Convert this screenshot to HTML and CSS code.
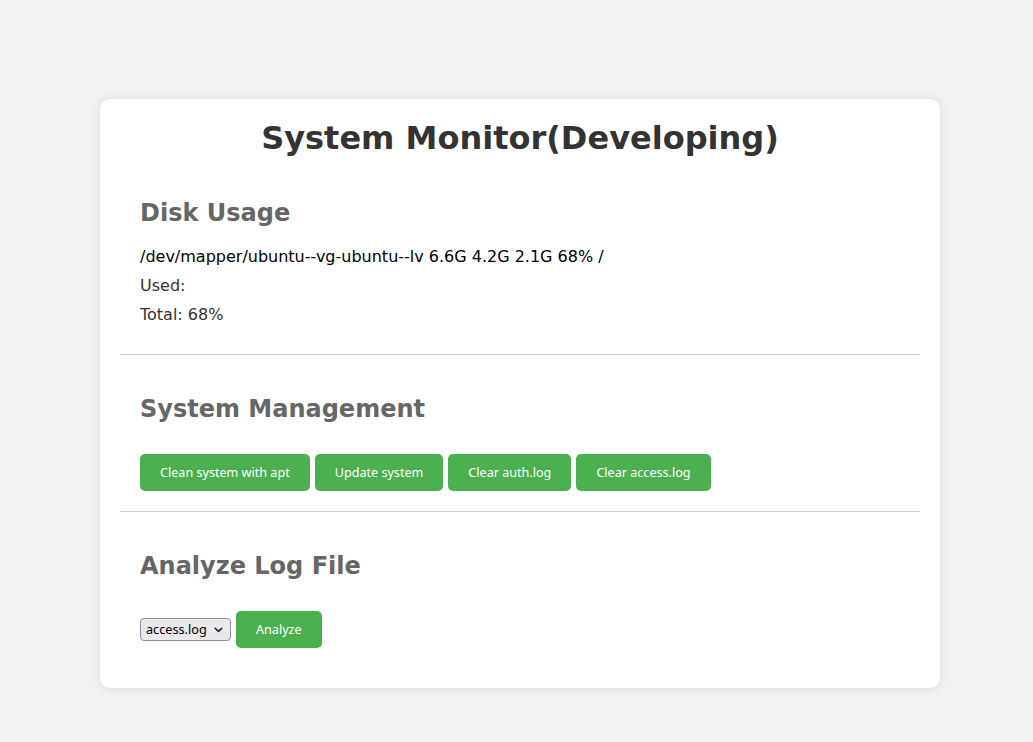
FILE: index.html
```html
<!DOCTYPE html>
<html lang="en">
<head>
<meta charset="utf-8">
<title>System Monitor</title>
<link rel="stylesheet" href="styles.css">
</head>
<body>
<div class="container">
  <h1 class="title">System Monitor(Developing)</h1>
  <section class="section">
    <h2 class="section-title">Disk Usage</h2>
    <p class="line line-raw">/dev/mapper/ubuntu--vg-ubuntu--lv 6.6G 4.2G 2.1G 68% /</p>
    <p class="line">Used: </p>
    <p class="line">Total: 68%</p>
  </section>
  <hr class="divider">
  <section class="section">
    <h2 class="section-title">System Management</h2>
    <div class="actions">
      <button class="btn">Clean system with apt</button>
      <button class="btn">Update system</button>
      <button class="btn">Clear auth.log</button>
      <button class="btn">Clear access.log</button>
    </div>
  </section>
  <hr class="divider">
  <section class="section">
    <h2 class="section-title">Analyze Log File</h2>
    <div class="actions">
      <span class="select-wrap">
        <select class="select">
          <option>access.log</option>
          <option>auth.log</option>
        </select>
        <svg class="chevron" width="9" height="6" viewBox="0 0 9 6"><path d="M1.2 1.2 L4.5 4.5 L7.8 1.2" fill="none" stroke="#1b1b1f" stroke-width="1.5" stroke-linecap="round" stroke-linejoin="round"/></svg>
      </span>
      <button class="btn">Analyze</button>
    </div>
  </section>
</div>
</body>
</html>
```

FILE: styles.css
```css
html, body {
  margin: 0;
  padding: 0;
}
body {
  background: #f2f2f2;
  font-family: "DejaVu Sans", sans-serif;
  color: #333;
}
.container {
  width: 800px;
  margin: 99px 0 54px 100px;
  padding: 20px;
  background: #fff;
  border-radius: 10px;
  box-shadow: 0 0 10px rgba(0, 0, 0, 0.1);
}
.title {
  margin: 0 0 2px;
  font-size: 32px;
  font-weight: bold;
  text-align: center;
  color: #333;
}
.section {
  padding: 20px;
}
.section-title {
  margin: 20px 0 20px;
  font-size: 24px;
  font-weight: bold;
  color: #666;
}
.line {
  margin: 10px 0;
  font-size: 16px;
  color: #333;
}
.line-raw {
  color: #000;
}
.divider {
  margin: 0;
  border: none;
  border-top: 1px solid #ccc;
  height: 0;
}
.actions {
  display: flex;
  align-items: center;
  gap: 5px;
  padding-top: 11px;
}
.btn {
  display: block;
  padding: 10px 20px;
  border: none;
  border-radius: 5px;
  background: #4caf50;
  color: #fff;
  font-family: "Noto Sans", sans-serif;
  font-size: 12.6px;
  line-height: 17px;
  cursor: pointer;
}
.select-wrap {
  position: relative;
  display: block;
}
.select {
  display: block;
  appearance: none;
  -webkit-appearance: none;
  width: 91px;
  height: 23px;
  margin: 0;
  padding: 0 0 0 5px;
  border: 1px solid #8f8f9d;
  border-radius: 4px;
  background: #e9e9ed;
  color: #000;
  font-family: "Noto Sans", sans-serif;
  font-size: 12.7px;
  line-height: 19px;
}
.chevron {
  position: absolute;
  top: 9px;
  left: 74px;
  pointer-events: none;
}
```
